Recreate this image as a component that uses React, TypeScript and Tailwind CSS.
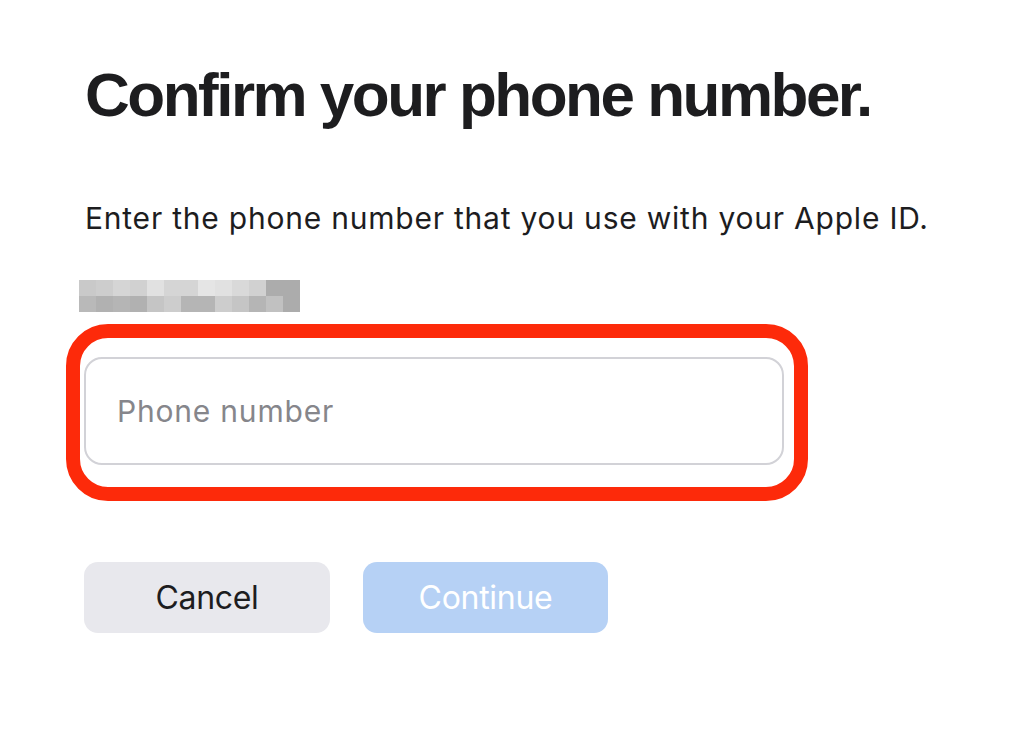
import React from "react";

const row1 = ["#c9c9c9", "#cdcdcd", "#d5d5d5", "#d1d1d1", "#e1e1e1", "#d5d5d5", "#d5d5d5", "#e5e5e5", "#e1e1e1", "#d9d9d9", "#d1d1d1", "#acacac", "#acacac"];
const row2 = ["#b9b9b9", "#b1b1b1", "#b5b5b5", "#b1b1b1", "#c5c5c5", "#cdcdcd", "#b5b5b5", "#b5b5b5", "#cdcdcd", "#c5c5c5", "#b5b5b5", "#c1c1c1", "#acacac"];

export default function App() {
  return (
    <div className="w-[1024px] h-[748px] bg-white overflow-hidden" style={{ fontFamily: '"Liberation Sans", Arial, sans-serif' }}>
      <div className="pl-[85px] pt-[63px] flex flex-col">
        <h1 className="text-[62px] leading-[64px] font-bold text-[#1d1d1f] tracking-[-2.5px]">Confirm your phone number.</h1>
        <p className="mt-[73px] text-[30px] leading-[36px] text-[#1d1d1f] tracking-[0.78px]" style={{ fontFamily: 'Inter, "Liberation Sans", sans-serif' }}>
          Enter the phone number that you use with your Apple ID.
        </p>
        <div className="mt-[44px] ml-[-6px] flex flex-col w-[221px]">
          <div className="flex">
            {row1.map((c, i) => (
              <div key={i} className="w-[17px] h-[16px]" style={{ backgroundColor: c }} />
            ))}
          </div>
          <div className="flex">
            {row2.map((c, i) => (
              <div key={i} className="w-[17px] h-[16px]" style={{ backgroundColor: c }} />
            ))}
          </div>
        </div>
        <div className="mt-[12px] ml-[-19px] w-[742px] h-[177px] rounded-[42px] border-[14px] border-[#fd2a0a] pl-[4px] pt-[19px]">
          <div className="w-[700px] h-[108px] rounded-[18px] border-[2px] border-[#d2d2d7] flex items-center pl-[31px]">
            <span className="text-[30px] text-[#86868b] tracking-[0.8px]" style={{ fontFamily: 'Inter, "Liberation Sans", sans-serif' }}>Phone number</span>
          </div>
        </div>
        <div className="mt-[61px] ml-[-1px] flex gap-[33px]" style={{ fontFamily: 'Inter, "Liberation Sans", sans-serif' }}>
          <button className="w-[246px] h-[71px] rounded-[14px] bg-[#e8e8ed] text-[32px] text-[#1d1d1f] tracking-[-0.3px]">Cancel</button>
          <button className="w-[245px] h-[71px] rounded-[14px] bg-[#b6d1f5] text-[32px] text-white tracking-[-0.3px]">Continue</button>
        </div>
      </div>
    </div>
  );
}
